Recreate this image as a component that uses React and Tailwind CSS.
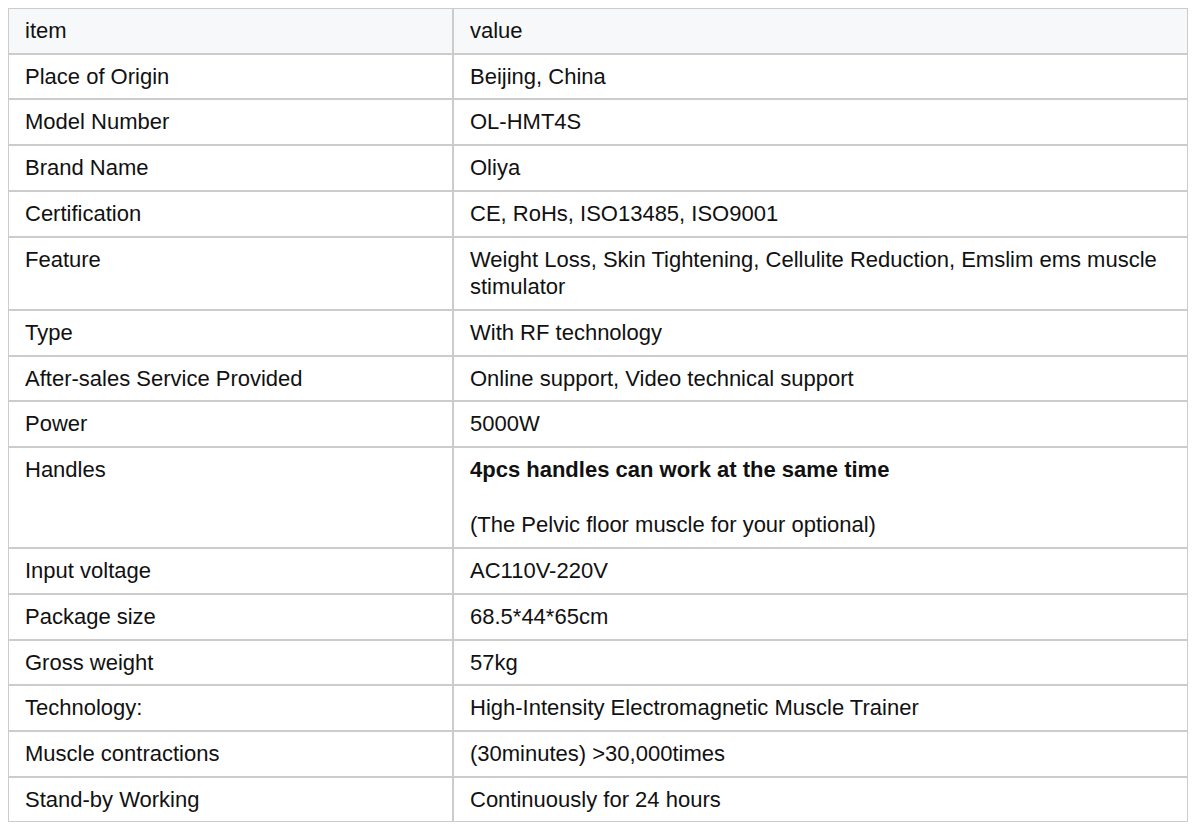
const rows = [
  ['Place of Origin', 'Beijing, China'],
  ['Model Number', 'OL-HMT4S'],
  ['Brand Name', 'Oliya'],
  ['Certification', 'CE, RoHs, ISO13485, ISO9001'],
  ['Feature', 'Weight Loss, Skin Tightening, Cellulite Reduction, Emslim ems muscle stimulator'],
  ['Type', 'With RF technology'],
  ['After-sales Service Provided', 'Online support, Video technical support'],
  ['Power', '5000W'],
  ['Handles', 'handles'],
  ['Input voltage', 'AC110V-220V'],
  ['Package size', '68.5*44*65cm'],
  ['Gross weight', '57kg'],
  ['Technology:', 'High-Intensity Electromagnetic Muscle Trainer'],
  ['Muscle contractions', '(30minutes) >30,000times'],
  ['Stand-by Working', 'Continuously for 24 hours'],
];

const cell = 'border border-[#cccccc] px-4 py-2 text-left align-top font-normal';

export default function App() {
  return (
    <div className="bg-white p-2 text-[22px] leading-[27.7px] text-[#111] font-['Liberation_Sans',Arial,sans-serif]">
      <table className="w-[1180px] border-separate border-spacing-0 table-fixed">
        <colgroup>
          <col className="w-[445px]" />
          <col />
        </colgroup>
        <thead>
          <tr className="bg-[#f7f8fa]">
            <th className={cell}>item</th>
            <th className={cell}>value</th>
          </tr>
        </thead>
        <tbody>
          {rows.map(([k, v]) => (
            <tr key={k}>
              <td className={cell}>{k}</td>
              <td className={cell}>
                {v === 'handles' ? (
                  <>
                    <div className="font-bold">4pcs handles can work at the same time</div>
                    <div>&nbsp;</div>
                    <div>(The Pelvic floor muscle for your optional)</div>
                  </>
                ) : (
                  v
                )}
              </td>
            </tr>
          ))}
        </tbody>
      </table>
    </div>
  );
}
